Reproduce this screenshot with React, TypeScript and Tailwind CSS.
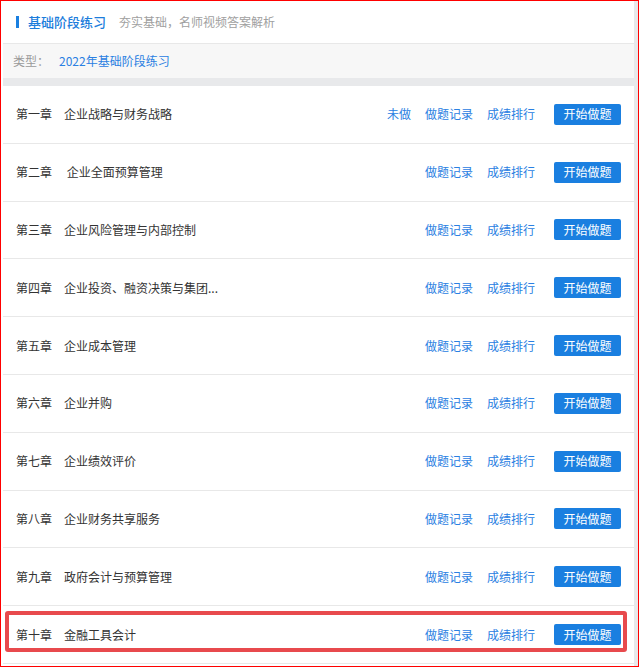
import React from 'react';

interface Chapter {
  no: string;
  title: string;
  undone?: boolean;
}

const chapters: Chapter[] = [
  { no: '第一章', title: '企业战略与财务战略', undone: true },
  { no: '第二章', title: ' 企业全面预算管理' },
  { no: '第三章', title: '企业风险管理与内部控制' },
  { no: '第四章', title: '企业投资、融资决策与集团...' },
  { no: '第五章', title: '企业成本管理' },
  { no: '第六章', title: '企业并购' },
  { no: '第七章', title: '企业绩效评价' },
  { no: '第八章', title: '企业财务共享服务' },
  { no: '第九章', title: '政府会计与预算管理' },
  { no: '第十章', title: '金融工具会计' },
];

const font = { fontFamily: '"Noto Sans CJK SC", "Noto Sans", sans-serif' };

const ChapterRow: React.FC<{ chapter: Chapter; highlight?: boolean }> = ({ chapter, highlight }) => (
  <div className="relative flex h-[57.8px] items-center border-b border-[#e8e8e8] pl-[13px] pr-[13px] text-[12px]">
    <span className="text-[#333]">{chapter.no}</span>
    <span className="ml-[12px] whitespace-pre text-[#333]">{chapter.title}</span>
    <div className="ml-auto flex items-center">
      {chapter.undone && <span className="mr-[14px] text-[#2a80e2]">未做</span>}
      <span className="text-[#2a80e2]">做题记录</span>
      <span className="ml-[14px] text-[#2a80e2]">成绩排行</span>
      <button className="ml-[19px] flex h-[21px] w-[67px] items-center justify-center rounded-[2px] bg-[#1a7fe0] text-[12px] text-white">
        开始做题
      </button>
    </div>
    {highlight && (
      <div className="pointer-events-none absolute left-[2px] top-[5px] h-[41px] w-[622px] rounded-[3px] border-[4px] border-[#e84a4d]" />
    )}
  </div>
);

export default function App() {
  return (
    <div className="h-[667px] w-[639px] overflow-hidden border border-[#ff0000] bg-white" style={font}>
      <div className="flex h-full">
        <div className="w-[2px] shrink-0 bg-white" />
        <div className="flex w-[631px] shrink-0 flex-col bg-white">
          <div className="flex h-[43px] shrink-0 items-center border-b border-[#e8e8e8] pl-[13px]">
            <span className="h-[12px] w-[3px] bg-[#1a7fe0]" />
            <span className="ml-[9px] text-[13px] font-medium text-[#1c7ddc]">基础阶段练习</span>
            <span className="ml-[13px] text-[12px] text-[#a0a0a0]">夯实基础，名师视频答案解析</span>
          </div>
          <div className="flex h-[34px] shrink-0 items-center bg-[#f7f7f7] pl-[10px] text-[12px]">
            <span className="text-[#9a9a9a]">类型：</span>
            <span className="ml-[10px] text-[#2a80e2]">2022年基础阶段练习</span>
          </div>
          <div className="h-[8px] shrink-0 bg-[#e8e9eb]" />
          <div className="flex flex-col">
            {chapters.map((c, i) => (
              <ChapterRow key={c.no} chapter={c} highlight={i === chapters.length - 1} />
            ))}
          </div>
        </div>
        <div className="w-[4px] shrink-0 bg-[#e8e9eb]" />
      </div>
    </div>
  );
}
